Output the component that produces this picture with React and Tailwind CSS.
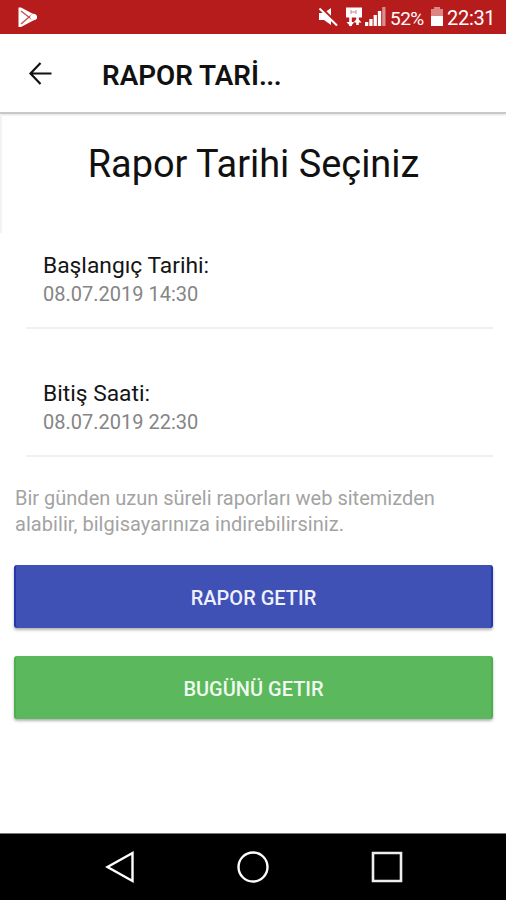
function StatusBar() {
  return (
    <div className="flex h-[34px] items-center bg-[#b71c1c] pl-[17px] pr-[10px] text-white">
      <svg width="22" height="22" viewBox="0 0 22 22">
        <path d="M1.500 1.500 4 1.500 20 10V12.500L4 21H1.500Z" fill="#fff" />
        <path d="M4 5 15 13.500M4 18 15 8.500" fill="none" stroke="#c94848" strokeWidth="1.2" />
        <circle cx="16.500" cy="11" r="3.200" fill="#fff" />
      </svg>
      <svg className="ml-auto" width="21" height="20" viewBox="0 0 21 20">
        <path d="M1 6h5l7-5v17l-7-5H1Z" fill="#fff" />
        <path d="M2 0 20 18" stroke="#b71c1c" strokeWidth="3.200" />
        <path d="M1.500 1.500 19 18.500" stroke="#fff" strokeWidth="2" />
      </svg>
      <svg className="ml-[6px]" width="18" height="20" viewBox="0 0 18 20">
        <path d="M1 0.500h16v10H1Z" fill="#fff" />
        <path d="M6 3v4M6 5h5M11 3v4" fill="none" stroke="#d98080" strokeWidth="1" />
        <path d="M5.500 10v9M12.500 18v-8" fill="none" stroke="#fff" strokeWidth="2.600" />
        <path d="M1.500 15h8l-4 4.500ZM8.500 15.500h8l-4-4.500Z" fill="#fff" />
      </svg>
      <svg className="ml-[2px]" width="21" height="20" viewBox="0 0 21 20">
        <path d="M0 15h3.300v4H0ZM4.300 12h3.300v7H4.300ZM8.600 8h3.300v11H8.600ZM12.900 4h3.300v15h-3.300Z" fill="#fff" />
        <path d="M17.200 0h3.300v19h-3.300Z" fill="#db8d8d" />
      </svg>
      <span className="ml-[4px] mt-[2px] w-[35px] whitespace-nowrap text-[19px] leading-none tracking-[-0.5px]">52%</span>
      <svg className="ml-[5px]" width="14" height="20" viewBox="0 0 14 20">
        <path d="M4 0h6v2h3v7H1V2h3Z" fill="#dc8585" />
        <path d="M1 9h12v10H1Z" fill="#fff" />
      </svg>
      <span className="ml-[3px] mt-[2px] w-[49px] whitespace-nowrap text-[20px] leading-none tracking-[-0.3px]">22:31</span>
    </div>
  );
}

function Header() {
  return (
    <header className="flex h-[80px] items-center border-b-2 border-[#c8c8c8] pl-[28px] shadow-[0_1px_2px_rgba(0,0,0,0.12)]">
      <svg width="24" height="24" viewBox="0 0 24 24" fill="none" stroke="#111" strokeWidth="2.200">
        <path d="M23.500 12.500H2.500M12.500 2 2.500 12.500l10 10.500" />
      </svg>
      <h1 className="ml-[50px] mt-[5px] whitespace-nowrap text-[27.800px] font-semibold leading-none text-[#111]">RAPOR TARİ<span className="tracking-[-0.6px]">...</span></h1>
    </header>
  );
}

function DateField({ label, value }) {
  return (
    <div className="ml-[26px] mr-[13px] h-[128px] border-b-2 border-[#f0f0f0] pl-[17px] pt-[50px]">
      <div className="text-[22.800px] leading-[30px] text-[#151515]">{label}</div>
      <div className="text-[20px] leading-[27px] text-[#858585]">{value}</div>
    </div>
  );
}

function NavBar() {
  return (
    <nav className="mt-auto flex h-[67px] items-center justify-between border-t border-[#777] bg-black pl-[105px] pr-[102px]">
      <svg width="30" height="34" viewBox="0 0 30 34" fill="none" stroke="#fff" strokeWidth="2.400">
        <path d="M27.500 3v28L2.500 17Z" />
      </svg>
      <svg width="34" height="34" viewBox="0 0 34 34" fill="none" stroke="#fff" strokeWidth="2.400">
        <circle cx="17" cy="17" r="14.500" />
      </svg>
      <svg width="34" height="34" viewBox="0 0 34 34" fill="none" stroke="#eee" strokeWidth="2.600">
        <path d="M3 3h28v28H3Z" />
      </svg>
    </nav>
  );
}

export default function App() {
  return (
    <div className="flex h-[900px] w-[506px] flex-col overflow-hidden bg-white font-[Roboto,sans-serif]">
      <StatusBar />
      <Header />
      <main>
        <div className="h-[119px] border-l-2 border-[#f3f3f3] pt-[25px]">
          <h2 className="-ml-[1px] whitespace-nowrap text-center text-[37.900px] leading-[50px] text-[#111]">Rapor Tarihi Seçiniz</h2>
        </div>
        <div className="-mt-[32px]">
          <DateField label="Başlangıç Tarihi:" value="08.07.2019 14:30" />
          <DateField label="Bitiş Saati:" value="08.07.2019 22:30" />
        </div>
        <p className="ml-[15px] mt-[28px] whitespace-nowrap text-[20px] leading-[26px] text-[#a3a3a3]">
          Bir günden uzun süreli raporları web sitemizden
          <br />
          <span className="tracking-[0.05px]">alabilir, bilgisayarınıza indirebilirsiniz.</span>
        </p>
        <div className="ml-[14px] mr-[13px] mt-[28px] flex flex-col gap-[28px]">
          <button className="h-[63px] rounded-[3px] border-x-2 border-[#2636ac] bg-[#3f51b5] pt-[2px] text-[20px] font-medium text-[#eef0ff] shadow-[0_2px_3px_rgba(0,0,0,0.3)]">RAPOR GETIR</button>
          <button className="h-[63px] rounded-[3px] border-x-2 border-[#4cb051] bg-[#5cb85c] pt-[2px] text-[20px] font-medium text-[#effbef] shadow-[0_2px_3px_rgba(0,0,0,0.3)]">BUGÜNÜ GETIR</button>
        </div>
      </main>
      <NavBar />
    </div>
  );
}
